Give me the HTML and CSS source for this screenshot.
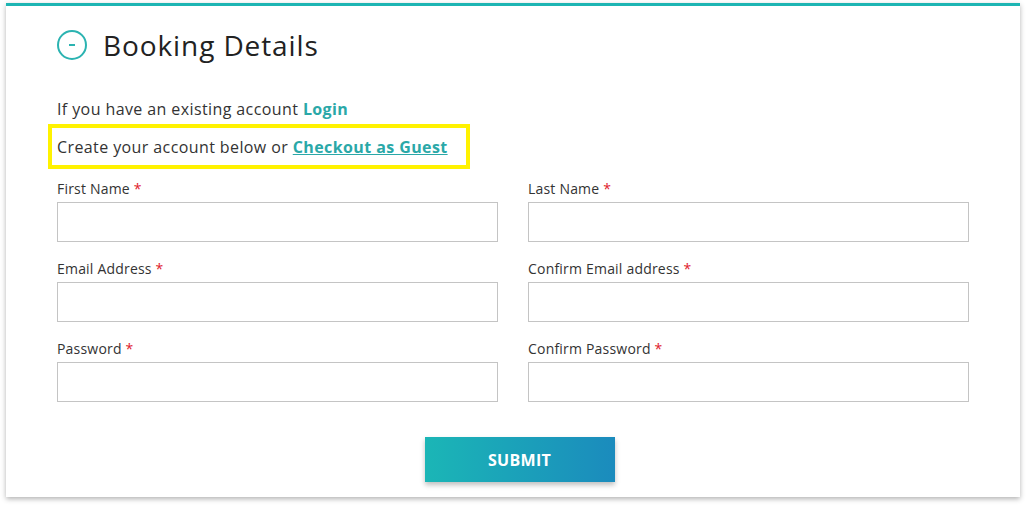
FILE: index.html
```html
<!DOCTYPE html>
<html>
<head>
<meta charset="utf-8">
<link rel="stylesheet" href="styles.css">
</head>
<body>
<div class="card">
  <div class="heading">
    <span class="toggle"><span class="minus"></span></span>
    <h2 class="title">Booking Details</h2>
  </div>
  <p class="intro">If you have an existing account <a class="link" href="#">Login</a></p>
  <div class="highlight">
    <p class="intro">Create your account below or <a class="link underline" href="#">Checkout as Guest</a></p>
  </div>
  <form class="form">
    <div class="grid">
      <div class="field">
        <label class="label">First Name <span class="req">*</span></label>
        <input class="input" type="text">
      </div>
      <div class="field">
        <label class="label">Last Name <span class="req">*</span></label>
        <input class="input" type="text">
      </div>
      <div class="field">
        <label class="label">Email Address <span class="req">*</span></label>
        <input class="input" type="text">
      </div>
      <div class="field">
        <label class="label">Confirm Email address <span class="req">*</span></label>
        <input class="input" type="text">
      </div>
      <div class="field">
        <label class="label">Password <span class="req">*</span></label>
        <input class="input" type="password">
      </div>
      <div class="field">
        <label class="label">Confirm Password <span class="req">*</span></label>
        <input class="input" type="password">
      </div>
    </div>
    <div class="actions">
      <button class="submit" type="button">SUBMIT</button>
    </div>
  </form>
</div>
</body>
</html>
```

FILE: styles.css
```css
* { box-sizing: border-box; }
html, body { margin: 0; padding: 0; background: #fff; }
body {
  font-family: "Open Sans", "Liberation Sans", sans-serif;
  color: #333;
  padding: 3px 0 9px;
  min-height: 506px;
}
.card {
  margin-left: 6px;
  width: 1014px;
  height: 494px;
  background: #fff;
  border-top: 3px solid #1db5b3;
  box-shadow: 0 2px 5px rgba(0,0,0,0.3);
  padding: 0 51px;
  display: flex;
  flex-direction: column;
}
.heading {
  display: flex;
  align-items: center;
  height: 74px;
  margin-top: 2px;
}
.toggle {
  width: 30px;
  height: 30px;
  border: 2px solid #2bb3b1;
  border-radius: 50%;
  display: flex;
  align-items: center;
  justify-content: center;
  margin-right: 16px;
}
.minus {
  width: 6px;
  height: 2px;
  background: #2bb3b1;
}
.title {
  margin: 0;
  font-size: 28px;
  font-weight: 400;
  color: #222;
  letter-spacing: 0.9px;
}
.intro {
  margin: 0;
  font-size: 16px;
  line-height: 22px;
  color: #333;
  letter-spacing: 0.4px;
}
.heading + .intro { margin-top: 16px; }
.link {
  color: #2aa8a8;
  font-weight: 700;
  text-decoration: none;
}
.underline { text-decoration: underline; }
.highlight {
  margin-top: 4px;
  margin-left: -9px;
  width: 422px;
  height: 45px;
  border: 4px solid #fff200;
  padding: 0 0 0 5px;
  display: flex;
  align-items: center;
}
.form { margin-top: 10px; }
.grid {
  display: grid;
  grid-template-columns: 1fr 1fr;
  column-gap: 30px;
  row-gap: 17px;
}
.field { display: flex; flex-direction: column; }
.label {
  font-size: 14px;
  line-height: 20px;
  color: #333;
  margin-bottom: 3px;
  letter-spacing: 0.2px;
}
.req { color: #e0202a; }
.input {
  height: 40px;
  border: 1px solid #c4c4c4;
  border-radius: 0;
  background: #fff;
  margin: 0;
}
.actions {
  display: flex;
  justify-content: center;
  margin-top: 35px;
}
.submit {
  width: 190px;
  height: 45px;
  border: none;
  background: linear-gradient(90deg, #1bb6b6 0%, #1b8bbd 100%);
  color: #fff;
  font-family: inherit;
  font-size: 16px;
  font-weight: 700;
  letter-spacing: 0.3px;
  box-shadow: 0 3px 5px rgba(0,0,0,0.25);
  margin-left: 13px;
}
```
